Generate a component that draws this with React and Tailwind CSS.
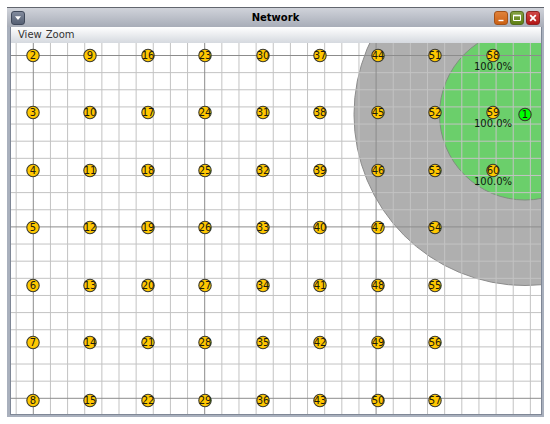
import React from 'react';

const GRID_STEP = 17.14;
const ORIGIN = { x: 22, y: 12.5 };
const NODE_STEP = 57.5;

// Columns of nodes, numbered downwards from 2
const COLUMN_LENGTHS = [7, 7, 7, 7, 7, 7, 7, 7, 3];

const buildNodes = () => {
  const nodes = [];
  let id = 2;
  COLUMN_LENGTHS.forEach((length, col) => {
    for (let row = 0; row < length; row++) {
      nodes.push({
        id: id++,
        x: ORIGIN.x + Math.floor(col * NODE_STEP),
        y: ORIGIN.y + Math.floor(row * NODE_STEP),
        rate: col === 8 ? '100.0%' : null,
      });
    }
  });
  return nodes;
};

const nodes = buildNodes();
const sender = { id: 1, x: 514, y: 71.5 };

const gridLines = Array.from({ length: 122 }, (_, i) => i - 1);

const Node = ({ id, x, y, fill }) => (
  <g>
    <circle cx={x} cy={y} r="6.2" fill={fill} stroke="#3a3a30" strokeWidth="1.1" />
    <text x={x} y={y + 3.5} textAnchor="middle" fill="#1c1a10">
      {id}
    </text>
  </g>
);

const NetworkCanvas = () => (
  <svg
    role="img"
    aria-label="Network"
    className="block w-full flex-1 overflow-hidden bg-white font-['DejaVu_Sans',sans-serif] text-[10px]"
  >
    {/* Interference and transmission range */}
    <circle cx={sender.x} cy={sender.y} r="171" fill="#afafaf" stroke="#8c8c8c" />
    <circle cx={sender.x} cy={sender.y} r="85.5" fill="#6bcf6b" stroke="#7f8f7f" />

    {/* Background grid, every tenth line is darker */}
    {[false, true].map((major) =>
      gridLines
        .filter((i) => (i % 10 === 0) === major)
        .map((i) => {
          const x = ORIGIN.x + 0.3 + i * GRID_STEP;
          const y = ORIGIN.y + i * GRID_STEP;
          const stroke = major ? '#8c8c8c' : '#c3c3c3';
          return (
            <g key={i} stroke={stroke}>
              <line x1={x} x2={x} y1="0" y2="100%" />
              <line x1="0" x2="100%" y1={y} y2={y} />
            </g>
          );
        })
    )}

    {nodes.map((node) => (
      <Node key={node.id} id={node.id} x={node.x} y={node.y} fill="#ffc800" />
    ))}
    <Node id={sender.id} x={sender.x} y={sender.y} fill="#00ff00" />

    {nodes
      .filter((node) => node.rate)
      .map((node) => (
        <text key={node.id} x={node.x} y={node.y + 14.5} textAnchor="middle" fill="#101810">
          {node.rate}
        </text>
      ))}
  </svg>
);

const TitleBar = () => (
  <header className="grid h-5 grid-cols-3 items-center border-t border-[#62666e] bg-linear-to-b from-[#d0d3da] to-[#a8adb8] px-1">
    <button
      type="button"
      aria-label="Window menu"
      className="flex h-3.5 w-3.5 items-center justify-center rounded-[3px] border border-[#3f485a] bg-linear-to-b from-[#828b9d] to-[#566074]"
    >
      <svg width="6" height="4" viewBox="0 0 6 4">
        <path d="M0 0.3H6L3 3.9Z" fill="#fff" />
      </svg>
    </button>
    <h1 className="text-center text-[10px] leading-4 font-bold text-black">Network</h1>
    <div className="flex justify-end gap-0.5">
      <button
        type="button"
        aria-label="Minimize"
        className="flex h-3.5 w-3.5 items-center justify-center rounded-[3px] border border-[#a35118] bg-linear-to-b from-[#e0823a] to-[#cb6010]"
      >
        <svg width="10" height="10" viewBox="0 0 10 10">
          <path d="M2.5 7.5H7.5" stroke="#fff" strokeWidth="1.4" />
        </svg>
      </button>
      <button
        type="button"
        aria-label="Maximize"
        className="flex h-3.5 w-3.5 items-center justify-center rounded-[3px] border border-[#536b1c] bg-linear-to-b from-[#83a042] to-[#5f8011]"
      >
        <svg width="10" height="10" viewBox="0 0 10 10">
          <path d="M1.5 2.5H8.5V7.5H1.5Z" fill="none" stroke="#fff" />
          <path d="M1 2.5H9" stroke="#fff" strokeWidth="1.6" />
        </svg>
      </button>
      <button
        type="button"
        aria-label="Close"
        className="flex h-3.5 w-3.5 items-center justify-center rounded-[3px] border border-[#8f2020] bg-linear-to-b from-[#d04545] to-[#b31414]"
      >
        <svg width="10" height="10" viewBox="0 0 10 10">
          <path d="M2.2 2.2L7.8 7.8M7.8 2.2L2.2 7.8" stroke="#fff" strokeWidth="1.8" />
        </svg>
      </button>
    </div>
  </header>
);

const MenuBar = () => (
  <nav className="flex h-4 items-center gap-1 bg-linear-to-b from-white to-[#d5d9df] px-[7px] text-[10px] leading-4 text-[#333]">
    <button type="button">View</button>
    <button type="button">Zoom</button>
  </nav>
);

const App = () => {
  return (
    <div className="flex h-screen flex-col bg-white pt-[7px] pr-[6px] pb-[7px] pl-[7px] font-['DejaVu_Sans',sans-serif]">
      <div className="flex flex-1 flex-col bg-[#a9b0bd]">
        <TitleBar />
        <main className="mr-[2px] mb-[2px] ml-[3px] flex flex-1 flex-col border border-t-0 border-[#7f8796]">
          <MenuBar />
          <NetworkCanvas />
        </main>
      </div>
    </div>
  );
};

export default App;
